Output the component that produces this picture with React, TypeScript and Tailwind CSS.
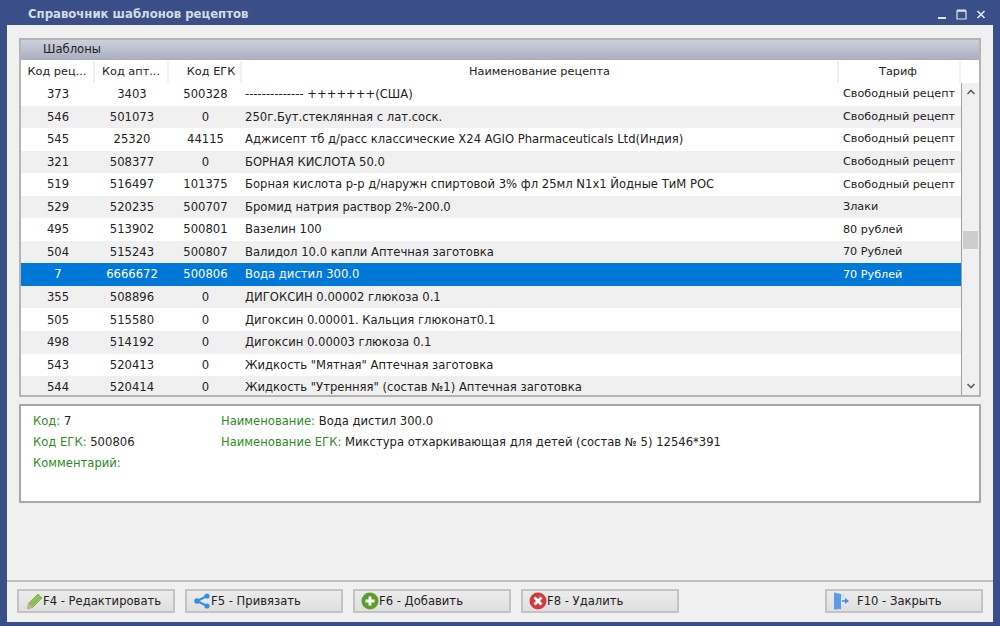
const rows = [
  ['373', '3403', '500328', '-------------- +++++++(США)', 'Свободный рецепт'],
  ['546', '501073', '0', '250г.Бут.стеклянная с лат.соск.', 'Свободный рецепт'],
  ['545', '25320', '44115', 'Аджисепт тб д/расс классические X24 AGIO Pharmaceuticals Ltd(Индия)', 'Свободный рецепт'],
  ['321', '508377', '0', 'БОРНАЯ КИСЛОТА 50.0', 'Свободный рецепт'],
  ['519', '516497', '101375', 'Борная кислота р-р д/наружн спиртовой 3% фл 25мл N1x1 Йодные ТиМ РОС', 'Свободный рецепт'],
  ['529', '520235', '500707', 'Бромид натрия раствор 2%-200.0', 'Злаки'],
  ['495', '513902', '500801', 'Вазелин 100', '80 рублей'],
  ['504', '515243', '500807', 'Валидол 10.0 капли Аптечная заготовка', '70 Рублей'],
  ['7', '6666672', '500806', 'Вода дистил 300.0', '70 Рублей'],
  ['355', '508896', '0', 'ДИГОКСИН 0.00002 глюкоза 0.1', ''],
  ['505', '515580', '0', 'Дигоксин 0.00001. Кальция глюконат0.1', ''],
  ['498', '514192', '0', 'Дигоксин 0.00003 глюкоза 0.1', ''],
  ['543', '520413', '0', 'Жидкость "Мятная" Аптечная заготовка', ''],
  ['544', '520414', '0', 'Жидкость "Утренняя" (состав №1) Аптечная заготовка', ''],
];

function PencilIcon() {
  return (
    <svg width="17" height="17" viewBox="0 0 17 17">
      <path d="M1.5 15.5l1-5L12 1l4 4-9.5 9.5z" fill="#8cc152" stroke="#7fa85a" strokeWidth="0.8" />
      <path d="M1.5 15.5l1-5 4 4z" fill="#c9b48a" />
    </svg>
  );
}

function ShareIcon() {
  return (
    <svg width="18" height="16" viewBox="0 0 18 16">
      <path d="M14 3L4 8l10 5" fill="none" stroke="#2f8fe6" strokeWidth="2" />
      <circle cx="14" cy="3" r="2.6" fill="#2f8fe6" />
      <circle cx="4" cy="8" r="2.8" fill="#2f8fe6" />
      <circle cx="14" cy="13" r="2.6" fill="#2f8fe6" />
    </svg>
  );
}

function PlusIcon() {
  return (
    <svg width="18" height="18" viewBox="0 0 18 18">
      <circle cx="9" cy="9" r="8.5" fill="#5b9e2d" />
      <path d="M9 4.5v9M4.5 9h9" stroke="#fff" strokeWidth="2.8" />
    </svg>
  );
}

function CrossIcon() {
  return (
    <svg width="18" height="18" viewBox="0 0 18 18">
      <circle cx="9" cy="9" r="8.5" fill="#d33c3c" />
      <path d="M5.5 5.5l7 7M12.5 5.5l-7 7" stroke="#fff" strokeWidth="2.8" />
    </svg>
  );
}

function ExitIcon() {
  return (
    <svg width="18" height="18" viewBox="0 0 18 18">
      <path d="M1 0.5l7 1.5v15l-7 0.5z" fill="#5b9be8" />
      <path d="M8 2h3.5v3H8zM8 13h3.5v3H8z" fill="#cfe0f6" />
      <path d="M9 9h4" stroke="#3f8ce6" strokeWidth="1.6" />
      <path d="M12 6l4 3-4 3z" fill="#3f8ce6" />
    </svg>
  );
}

function ToolButton({ icon, label, textClass }: { icon: React.ReactNode; label: string; textClass: string }) {
  return (
    <button className="flex h-[24px] w-[158px] items-center border-2 border-[#c4c4c4] bg-gradient-to-b from-[#ececec] to-[#dfdfdf] pl-[6px] text-[11.6px] text-[#222]">
      <span className="flex w-[18px] shrink-0 items-center justify-center">{icon}</span>
      <span className={`pt-[1px] ${textClass}`}>{label}</span>
    </button>
  );
}

export default function App() {
  return (
    <div className="flex h-[626px] w-[1000px] flex-col overflow-hidden bg-[#3a4f88] text-[11.6px] font-['DejaVu_Sans',sans-serif] text-[#222]">
      <div className="flex h-[25px] shrink-0 items-center justify-between pl-[28px] pr-[14px]">
        <span className="pt-[5px] text-[11.7px] font-semibold text-[#d5dbe6]">Справочник шаблонов рецептов</span>
        <div className="flex items-center gap-[9px] pt-[3px] text-[#dfe4ec]">
          <svg width="10" height="11" viewBox="0 0 10 11"><path d="M1 9h8" stroke="currentColor" strokeWidth="2" /></svg>
          <svg width="11" height="11" viewBox="0 0 11 11"><path d="M1 2h9v8H1z" fill="none" stroke="currentColor" strokeWidth="1.2" /><path d="M1 1.5h9" stroke="currentColor" strokeWidth="2" /></svg>
          <svg width="10" height="11" viewBox="0 0 10 11"><path d="M1.5 2l7 7M8.5 2l-7 7" stroke="currentColor" strokeWidth="1.7" /></svg>
        </div>
      </div>

      <div className="mx-[7px] mb-[4px] flex min-h-0 flex-1 flex-col bg-[#f0f0f0]">
        <div className="mx-[12px] mt-[13px] flex h-[359px] shrink-0 flex-col overflow-hidden border-2 border-[#b4b4b4] bg-white">
          <div className="flex h-[20px] shrink-0 items-center bg-gradient-to-b from-[#cdd0dc] to-[#a9adc0] pl-[22px]">Шаблоны</div>
          <div className="flex h-[23px] shrink-0 items-center bg-white pr-[18px] text-center text-[11.3px]">
            <div className="w-[74px] border-r-2 border-[#f0f0f0] leading-[22px]">Код рец...</div>
            <div className="w-[74px] border-r-2 border-[#f0f0f0] leading-[22px]">Код апт...</div>
            <div className="w-[73px] border-r-2 border-[#f0f0f0] pl-[13px] leading-[22px]">Код ЕГК</div>
            <div className="w-[597px] border-r-2 border-[#f0f0f0] leading-[22px]">Наименование рецепта</div>
            <div className="flex-1 border-r-2 border-[#f0f0f0] pr-[2px] leading-[22px]">Тариф</div>
          </div>
          <div className="flex min-h-0 flex-1">
            <div className="min-w-0 flex-1 overflow-hidden">
              {rows.map((r, i) => (
                <div
                  key={r[0]}
                  className={`flex h-[22.55px] items-center pt-[1px] ${i === 8 ? 'bg-[#0078d7] text-white' : i % 2 === 1 ? 'bg-[#f0f0f0]' : 'bg-white'}`}
                >
                  <div className="w-[74px] text-center">{r[0]}</div>
                  <div className="w-[74px] text-center">{r[1]}</div>
                  <div className="w-[73px] text-center">{r[2]}</div>
                  <div className="w-[597px] truncate pl-[3px]">{r[3]}</div>
                  <div className="flex-1 truncate pl-[4px] text-[11.2px]">{r[4]}</div>
                </div>
              ))}
            </div>
            <div className="flex w-[18px] shrink-0 flex-col items-center border-l border-[#a0a0a0] bg-[#f0f0f0]">
              <svg className="mt-[5px]" width="10" height="8" viewBox="0 0 10 8"><path d="M1.5 6L5 2.5 8.5 6" fill="none" stroke="#606060" strokeWidth="1.6" /></svg>
              <div className="mt-[135px] h-[18px] w-[15px] bg-[#cdcdcd]" />
              <div className="flex-1" />
              <svg className="mb-[5px]" width="10" height="8" viewBox="0 0 10 8"><path d="M1.5 2L5 5.5 8.5 2" fill="none" stroke="#606060" strokeWidth="1.6" /></svg>
            </div>
          </div>
        </div>

        <div className="mx-[12px] mt-[7px] flex h-[99px] shrink-0 flex-col gap-[3px] border-2 border-[#a8a8a8] bg-white pl-[12px] pt-[7px]">
          <div className="flex h-[18px] items-center">
            <div className="w-[188px]"><span className="text-[#2e8b1f]">Код:</span> 7</div>
            <div><span className="text-[#2e8b1f]">Наименование:</span> Вода дистил 300.0</div>
          </div>
          <div className="flex h-[18px] items-center">
            <div className="w-[188px]"><span className="text-[#2e8b1f]">Код ЕГК:</span> 500806</div>
            <div><span className="text-[#2e8b1f]">Наименование ЕГК:</span> Микстура отхаркивающая для детей (состав № 5) 12546*391</div>
          </div>
          <div className="flex h-[18px] items-center text-[#2e8b1f]">Комментарий:</div>
        </div>

        <div className="mt-auto flex h-[42px] shrink-0 items-start border-t-2 border-[#c0c0c0] pl-[10px] pr-[10px] pt-[7px]">
          <ToolButton icon={<PencilIcon />} label="F4 - Редактировать" textClass="" />
          <div className="w-[10px]" />
          <ToolButton icon={<ShareIcon />} label="F5 - Привязать" textClass="" />
          <div className="w-[10px]" />
          <ToolButton icon={<PlusIcon />} label="F6 - Добавить" textClass="" />
          <div className="w-[10px]" />
          <ToolButton icon={<CrossIcon />} label="F8 - Удалить" textClass="" />
          <div className="flex-1" />
          <ToolButton icon={<ExitIcon />} label="F10 - Закрыть" textClass="pl-[6px]" />
        </div>
      </div>
    </div>
  );
}
